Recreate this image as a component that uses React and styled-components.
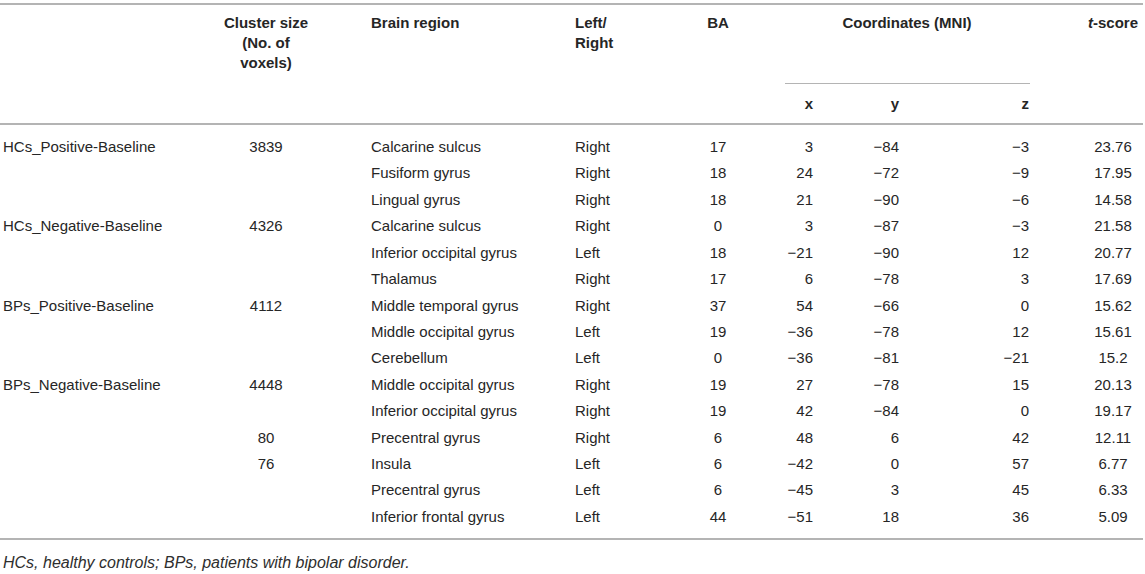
import styled, { createGlobalStyle } from "styled-components";

const GlobalStyle = createGlobalStyle`
  html, body {
    margin: 0;
    padding: 0;
    background: #fff;
  }
  body {
    font-family: "Liberation Sans", Arial, sans-serif;
    color: #262626;
  }
`;

// column geometry taken from the screenshot: width, alignment, side padding
const cols = [
  { w: 161, align: "left", pl: 3 },
  { w: 210, align: "center" },
  { w: 204, align: "left" },
  { w: 86, align: "left" },
  { w: 114, align: "center" },
  { w: 38, align: "right" },
  { w: 86, align: "right" },
  { w: 131, align: "right", pr: 1 },
  { w: 113, align: "center", pl: 53 },
];

const template = cols.map((c) => `${c.w}px`).join(" ");

const rows = [
  ["HCs_Positive-Baseline", "3839", "Calcarine sulcus", "Right", "17", "3", "−84", "−3", "23.76"],
  ["", "", "Fusiform gyrus", "Right", "18", "24", "−72", "−9", "17.95"],
  ["", "", "Lingual gyrus", "Right", "18", "21", "−90", "−6", "14.58"],
  ["HCs_Negative-Baseline", "4326", "Calcarine sulcus", "Right", "0", "3", "−87", "−3", "21.58"],
  ["", "", "Inferior occipital gyrus", "Left", "18", "−21", "−90", "12", "20.77"],
  ["", "", "Thalamus", "Right", "17", "6", "−78", "3", "17.69"],
  ["BPs_Positive-Baseline", "4112", "Middle temporal gyrus", "Right", "37", "54", "−66", "0", "15.62"],
  ["", "", "Middle occipital gyrus", "Left", "19", "−36", "−78", "12", "15.61"],
  ["", "", "Cerebellum", "Left", "0", "−36", "−81", "−21", "15.2"],
  ["BPs_Negative-Baseline", "4448", "Middle occipital gyrus", "Right", "19", "27", "−78", "15", "20.13"],
  ["", "", "Inferior occipital gyrus", "Right", "19", "42", "−84", "0", "19.17"],
  ["", "80", "Precentral gyrus", "Right", "6", "48", "6", "42", "12.11"],
  ["", "76", "Insula", "Left", "6", "−42", "0", "57", "6.77"],
  ["", "", "Precentral gyrus", "Left", "6", "−45", "3", "45", "6.33"],
  ["", "", "Inferior frontal gyrus", "Left", "44", "−51", "18", "36", "5.09"],
];

const App = () => {
  return (
    <>
      <GlobalStyle />
      <Page>
        <Table>
          <Head>
            <HeadCell $col={1} $span={2} $align="center">
              Cluster size
              <br />
              (No. of
              <br />
              voxels)
            </HeadCell>
            <HeadCell $col={2} $span={2} $align="left">
              Brain region
            </HeadCell>
            <HeadCell $col={3} $span={2} $align="left">
              Left/
              <br />
              Right
            </HeadCell>
            <HeadCell $col={4} $span={2} $align="center">
              BA
            </HeadCell>
            <GroupCell>
              <GroupLabel>Coordinates (MNI)</GroupLabel>
            </GroupCell>
            <HeadCell $col={8} $span={2} $align="center">
              <i>t</i>-score
            </HeadCell>
            <AxisCell $col={5}>x</AxisCell>
            <AxisCell $col={6}>y</AxisCell>
            <AxisCell $col={7}>z</AxisCell>
          </Head>
          <Body>
            {rows.map((r, ri) =>
              r.map((v, ci) => (
                <Cell key={`${ri}-${ci}`} $i={ci}>
                  {v}
                </Cell>
              ))
            )}
          </Body>
        </Table>
        <Note>HCs, healthy controls; BPs, patients with bipolar disorder.</Note>
      </Page>
    </>
  );
};

export default App;

const Page = styled.div`
  width: 1145px;
  padding-top: 3px;
`;

const Table = styled.div`
  width: 1143px;
  border-top: 2px solid #b4b4b4;
  border-bottom: 2px solid #b4b4b4;
`;

const Head = styled.div`
  display: grid;
  grid-template-columns: ${template};
  grid-template-rows: 79px 39px;
  border-bottom: 2px solid #b4b4b4;
  font-size: 15px;
  font-weight: 700;
  line-height: 20px;
`;

const HeadCell = styled.div`
  grid-column: ${(p) => p.$col + 1};
  grid-row: 1 / span ${(p) => p.$span};
  text-align: ${(p) => p.$align};
  padding-top: 8px;
  padding-left: ${(p) => cols[p.$col].pl || 0}px;
  padding-right: ${(p) => cols[p.$col].pr || 0}px;
  white-space: nowrap;

  i {
    font-style: italic;
  }
`;

const GroupCell = styled.div`
  grid-column: 6 / span 3;
  grid-row: 1;
  padding: 8px 1px 0 0;
  margin-left: 10px;
  border-bottom: 1px solid #b4b4b4;
`;

const GroupLabel = styled.div`
  text-align: center;
  white-space: nowrap;
`;

const AxisCell = styled.div`
  grid-column: ${(p) => p.$col + 1};
  grid-row: 2;
  display: flex;
  align-items: center;
  justify-content: flex-end;
  padding-right: ${(p) => cols[p.$col].pr || 0}px;
`;

const Body = styled.div`
  display: grid;
  grid-template-columns: ${template};
  grid-auto-rows: 26.43px;
  align-items: center;
  padding: 8.8px 0 7.6px;
  font-size: 15px;
  line-height: 20px;
`;

const Cell = styled.div`
  text-align: ${(p) => cols[p.$i].align};
  padding-left: ${(p) => cols[p.$i].pl || 0}px;
  padding-right: ${(p) => cols[p.$i].pr || 0}px;
  white-space: nowrap;
`;

const Note = styled.div`
  margin-top: 13px;
  padding-left: 3px;
  font-size: 16px;
  line-height: 20px;
  font-style: italic;
  color: #2e2e2e;
`;
